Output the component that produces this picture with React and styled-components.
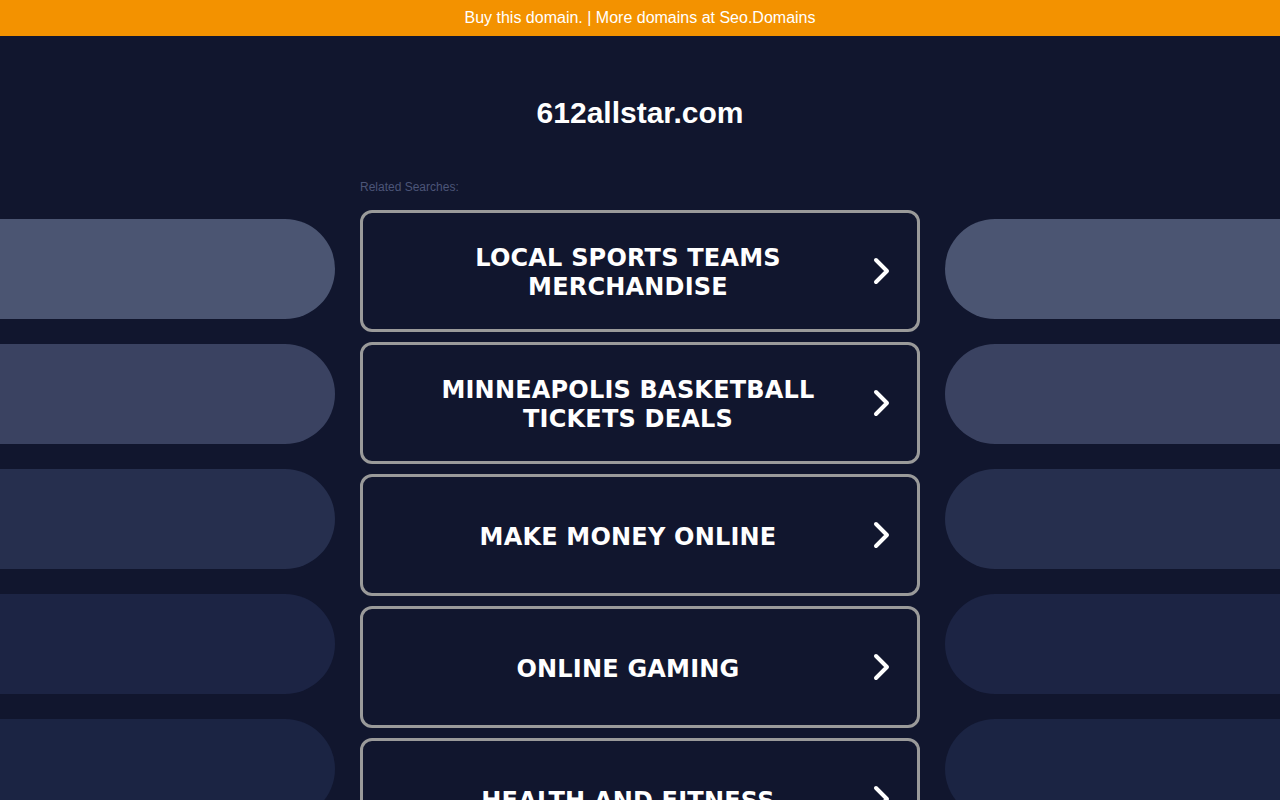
import React from "react";
import styled, { createGlobalStyle } from "styled-components";

const GlobalStyle = createGlobalStyle`
    html, body {
        margin: 0;
        padding: 0;
        background: #11162e;
        overflow: hidden;
    }
    body {
        font-family: "Liberation Sans", Arial, sans-serif;
    }
`;

const TopBar = styled.div`
    height: 36px;
    background: #f39200;
    color: #ffffff;
    font-size: 16px;
    display: flex;
    align-items: center;
    justify-content: center;
`;

const Title = styled.h1`
    margin: 0;
    padding-top: 61px;
    height: 32px;
    line-height: 32px;
    text-align: center;
    color: #ffffff;
    font-size: 30px;
    font-weight: bold;
`;

const Layout = styled.div`
    display: grid;
    grid-template-columns: 335px 560px 335px;
    column-gap: 25px;
    margin-top: 51px;
`;

const Side = styled.div`
    display: flex;
    flex-direction: column;
    gap: 25px;
    padding-top: 39px;
`;

const Pill = styled.div`
    height: 100px;
    background: ${(p) => p.$color};
    border-radius: ${(p) => (p.$right ? "50px 0 0 50px" : "0 50px 50px 0")};
`;

const Center = styled.div`
    display: flex;
    flex-direction: column;
`;

const Label = styled.div`
    font-size: 12px;
    line-height: 14px;
    color: #4c5578;
    margin-bottom: 16px;
`;

const List = styled.div`
    display: flex;
    flex-direction: column;
    gap: 10px;
`;

const Item = styled.a`
    box-sizing: border-box;
    height: 122px;
    border: 3px solid #9a9a9a;
    border-radius: 12px;
    display: flex;
    align-items: center;
    padding: 0 26px 0 30px;
    text-decoration: none;
    cursor: pointer;
`;

const ItemText = styled.span`
    flex: 1;
    text-align: center;
    color: #ffffff;
    font-family: "DejaVu Sans", Verdana, sans-serif;
    font-weight: bold;
    font-size: 24px;
    line-height: 29px;
    letter-spacing: 0.2px;
    padding-top: 4px;
    margin-right: 10px;
`;

const Chevron = () => (
    <svg width="18" height="28" viewBox="0 0 18 28">
        <polyline
            points="3,3 14,14 3,25"
            fill="none"
            stroke="#ffffff"
            strokeWidth="4"
            strokeLinecap="round"
            strokeLinejoin="round"
        />
    </svg>
);

const searches = [
    "LOCAL SPORTS TEAMS MERCHANDISE",
    "MINNEAPOLIS BASKETBALL TICKETS DEALS",
    "MAKE MONEY ONLINE",
    "ONLINE GAMING",
    "HEALTH AND FITNESS",
];

const pillColors = ["#4b5572", "#3a4261", "#262f4e", "#1c2444", "#1b2443"];

export default function App() {
    return (
        <React.Fragment>
            <GlobalStyle />
            <TopBar>Buy this domain. | More domains at Seo.Domains</TopBar>
            <Title>612allstar.com</Title>
            <Layout>
                <Side>
                    {pillColors.map((c) => (
                        <Pill key={c} $color={c} />
                    ))}
                </Side>
                <Center>
                    <Label>Related Searches:</Label>
                    <List>
                        {searches.map((s) => (
                            <Item key={s}>
                                <ItemText>{s}</ItemText>
                                <Chevron />
                            </Item>
                        ))}
                    </List>
                </Center>
                <Side>
                    {pillColors.map((c) => (
                        <Pill key={c} $color={c} $right />
                    ))}
                </Side>
            </Layout>
        </React.Fragment>
    );
}
